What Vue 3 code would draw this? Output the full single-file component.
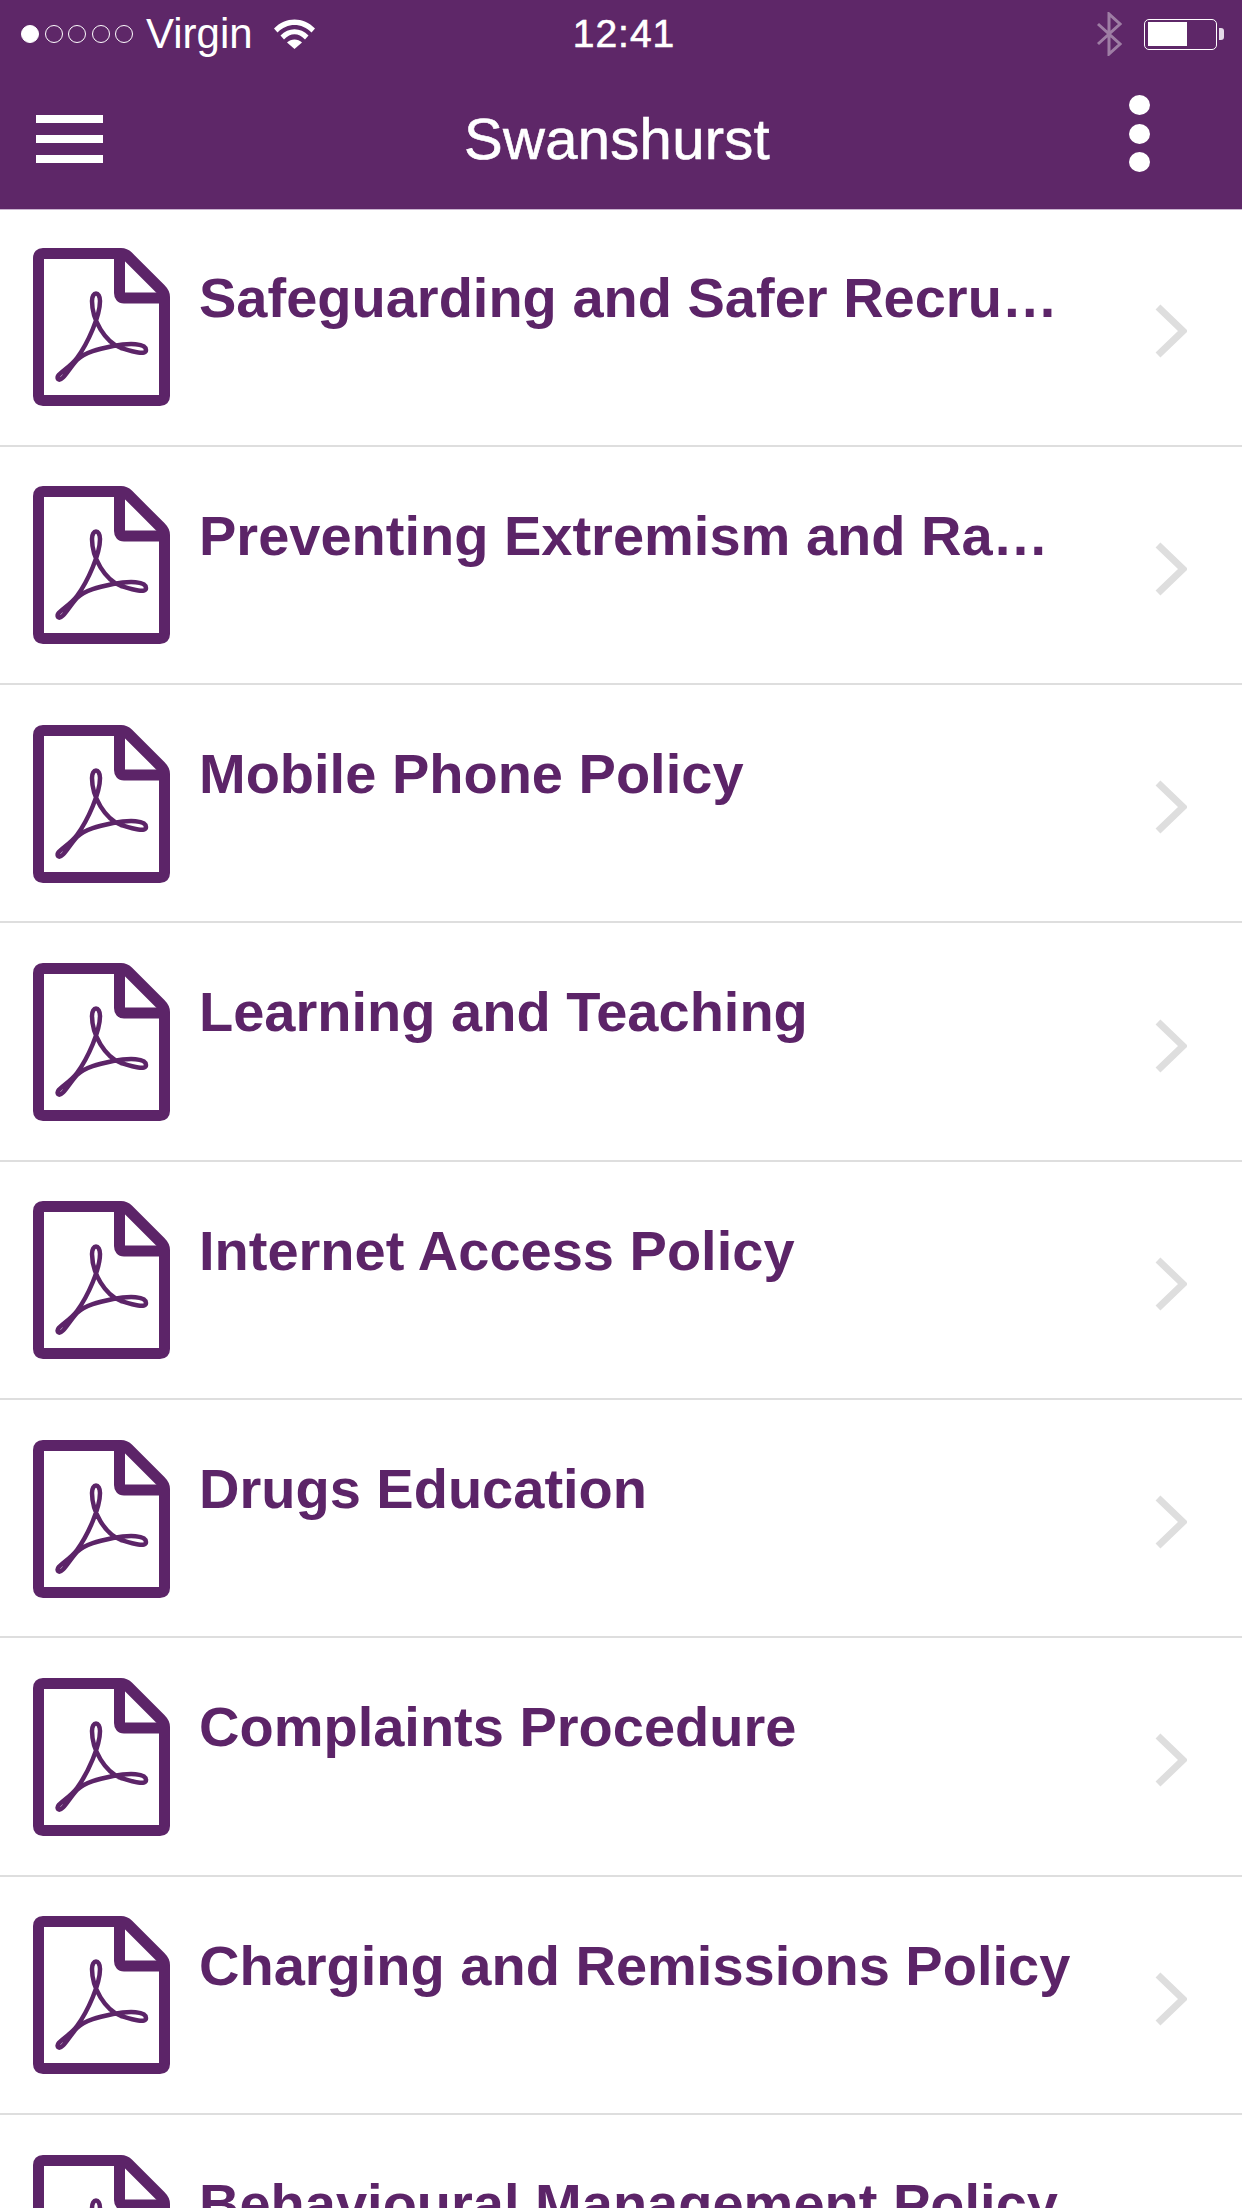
<template>
  <div class="phone">
    <header class="top">
      <div class="status">
        <div class="carrier">
          <span class="signal">
            <i v-for="n in 5" :key="n" class="dot" :class="{ on: n === 1 }"></i>
          </span>
          <span class="carrier-name">Virgin</span>
          <svg class="wifi" viewBox="0 0 41 30">
            <path d="M0 9.500C11.500 -2.500 29.500 -2.500 41 9.500L37.500 13.500C28 3.500 13 3.500 3.500 13.500Z" fill="#fff" />
            <path d="M6.500 16.500C14.500 8 26.500 8 34.500 16.500L31 20.500C24.500 13.500 16.500 13.500 10 20.500Z" fill="#fff" />
            <path d="M13 23.500C17 19.500 24 19.500 28 23.500L20.500 30Z" fill="#fff" />
          </svg>
        </div>
        <div class="time">12:41</div>
        <div class="status-right">
          <svg class="bt" viewBox="0 0 26 44">
            <path d="M2 12L24 32L13 42V2L24 12L2 32" fill="none" stroke="#fff" stroke-opacity="0.4" stroke-width="3" />
          </svg>
          <div class="battery"><div class="battery-fill"></div></div>
          <div class="battery-nub"></div>
        </div>
      </div>
      <nav class="nav">
        <div class="burger"><span></span><span></span><span></span></div>
        <div class="title">Swanshurst</div>
        <div class="more"><span></span><span></span><span></span></div>
      </nav>
    </header>

    <ul class="list">
      <li v-for="item in items" :key="item" class="row">
        <svg class="pdf" viewBox="0 0 137 158">
          <path
            d="M10 5.500H88C91 5.500 93 6.500 95 8.500L127.500 41C130 43.500 131.500 46 131.500 49V148C131.500 151 130 152.500 127 152.500H10C7 152.500 5.500 151 5.500 148V10C5.500 7 7 5.500 10 5.500Z"
            fill="none" stroke="#5c2468" stroke-width="11" stroke-linejoin="round" />
          <path d="M86.500 7V45C86.500 48 88 50 91 50H131" fill="none" stroke="#5c2468" stroke-width="11" />
          <path
            d="M25 131C22 126 36 121 44 110C55 95 67 68 67 53C67 43 59 43 59 53C59 72 72 94 88 100C98 103 113 108 113 102C113 95 96 95 80 98C66 101 52 104 44 112C37 119 29 135 25 131Z"
            fill="none" stroke="#5c2468" stroke-width="4.500" stroke-linejoin="round" />
        </svg>
        <div class="label">{{ item }}</div>
        <svg class="chevron" viewBox="0 0 32 54">
          <path d="M3 3L28 27L3 51" fill="none" stroke="#dedede" stroke-width="7" />
        </svg>
      </li>
    </ul>
  </div>
</template>

<script setup>
const items = [
  'Safeguarding and Safer Recru…',
  'Preventing Extremism and Ra…',
  'Mobile Phone Policy',
  'Learning and Teaching',
  'Internet Access Policy',
  'Drugs Education',
  'Complaints Procedure',
  'Charging and Remissions Policy',
  'Behavioural Management Policy',
]
</script>

<style>
html, body {
  margin: 0;
  background: #fff;
}
</style>

<style scoped>
.phone {
  width: 1242px;
  height: 2208px;
  overflow: hidden;
  background: #fff;
  font-family: "Liberation Sans", Arial, sans-serif;
}
.top {
  height: 210px;
  box-sizing: border-box;
  background: #5e2768;
  border-bottom: 1px solid #c9b3cf;
  color: #fff;
}
.status {
  height: 68px;
  display: grid;
  grid-template-columns: 1fr auto 1fr;
  align-items: center;
  padding: 0 18px 0 21px;
}
.carrier {
  display: flex;
  align-items: center;
}
.signal {
  display: flex;
  gap: 5.500px;
}
.dot {
  width: 18px;
  height: 18px;
  box-sizing: border-box;
  border: 1.500px solid #fff;
  border-radius: 50%;
}
.dot.on {
  background: #fff;
}
.carrier-name {
  margin-left: 13px;
  font-size: 42px;
}
.wifi {
  width: 41px;
  height: 30px;
  margin-left: 21px;
}
.time {
  font-size: 39px;
  letter-spacing: 1px;
  margin-left: 3px;
  -webkit-text-stroke: 0.6px #fff;
}
.status-right {
  display: flex;
  align-items: center;
  justify-content: flex-end;
}
.bt {
  width: 26px;
  height: 44px;
  margin-right: 22px;
}
.battery {
  width: 73px;
  height: 31px;
  box-sizing: border-box;
  padding: 2.500px;
  border: 1.500px solid #fff;
  border-radius: 5px;
}
.battery-fill {
  width: 39px;
  height: 100%;
  background: #fff;
}
.battery-nub {
  width: 5px;
  height: 12px;
  margin-left: 2px;
  background: #e5d9e8;
  border-radius: 0 3px 3px 0;
}
.nav {
  height: 141px;
  display: flex;
  align-items: center;
  justify-content: space-between;
  padding: 0 92px 0 36px;
}
.burger {
  width: 67px;
  display: flex;
  flex-direction: column;
  gap: 12px;
  margin-top: 0;
}
.burger span {
  height: 8px;
  background: #fff;
}
.title {
  font-size: 58px;
  line-height: 66px;
  letter-spacing: 0.3px;
  margin-left: 2px;
  -webkit-text-stroke: 0.6px #fff;
}
.more {
  display: flex;
  flex-direction: column;
  gap: 8.500px;
  margin-top: -10px;
}
.more span {
  width: 21px;
  height: 20px;
  background: #fff;
  border-radius: 50%;
}
.list {
  list-style: none;
  margin: -1.500px 0 0;
  padding: 0;
}
.row {
  height: 238.300px;
  box-sizing: border-box;
  display: flex;
  align-items: center;
  padding: 0 55px 0 33px;
  border-bottom: 2px solid #dedede;
}
.pdf {
  width: 137px;
  height: 158px;
  flex: none;
  margin-top: 1px;
}
.label {
  margin-left: 29px;
  align-self: flex-start;
  margin-top: 56px;
  font-size: 56px;
  line-height: 66px;
  font-weight: 700;
  color: #5c2468;
  white-space: nowrap;
}
.chevron {
  width: 32px;
  height: 54px;
  flex: none;
  margin-left: auto;
  margin-top: 8px;
}
</style>
